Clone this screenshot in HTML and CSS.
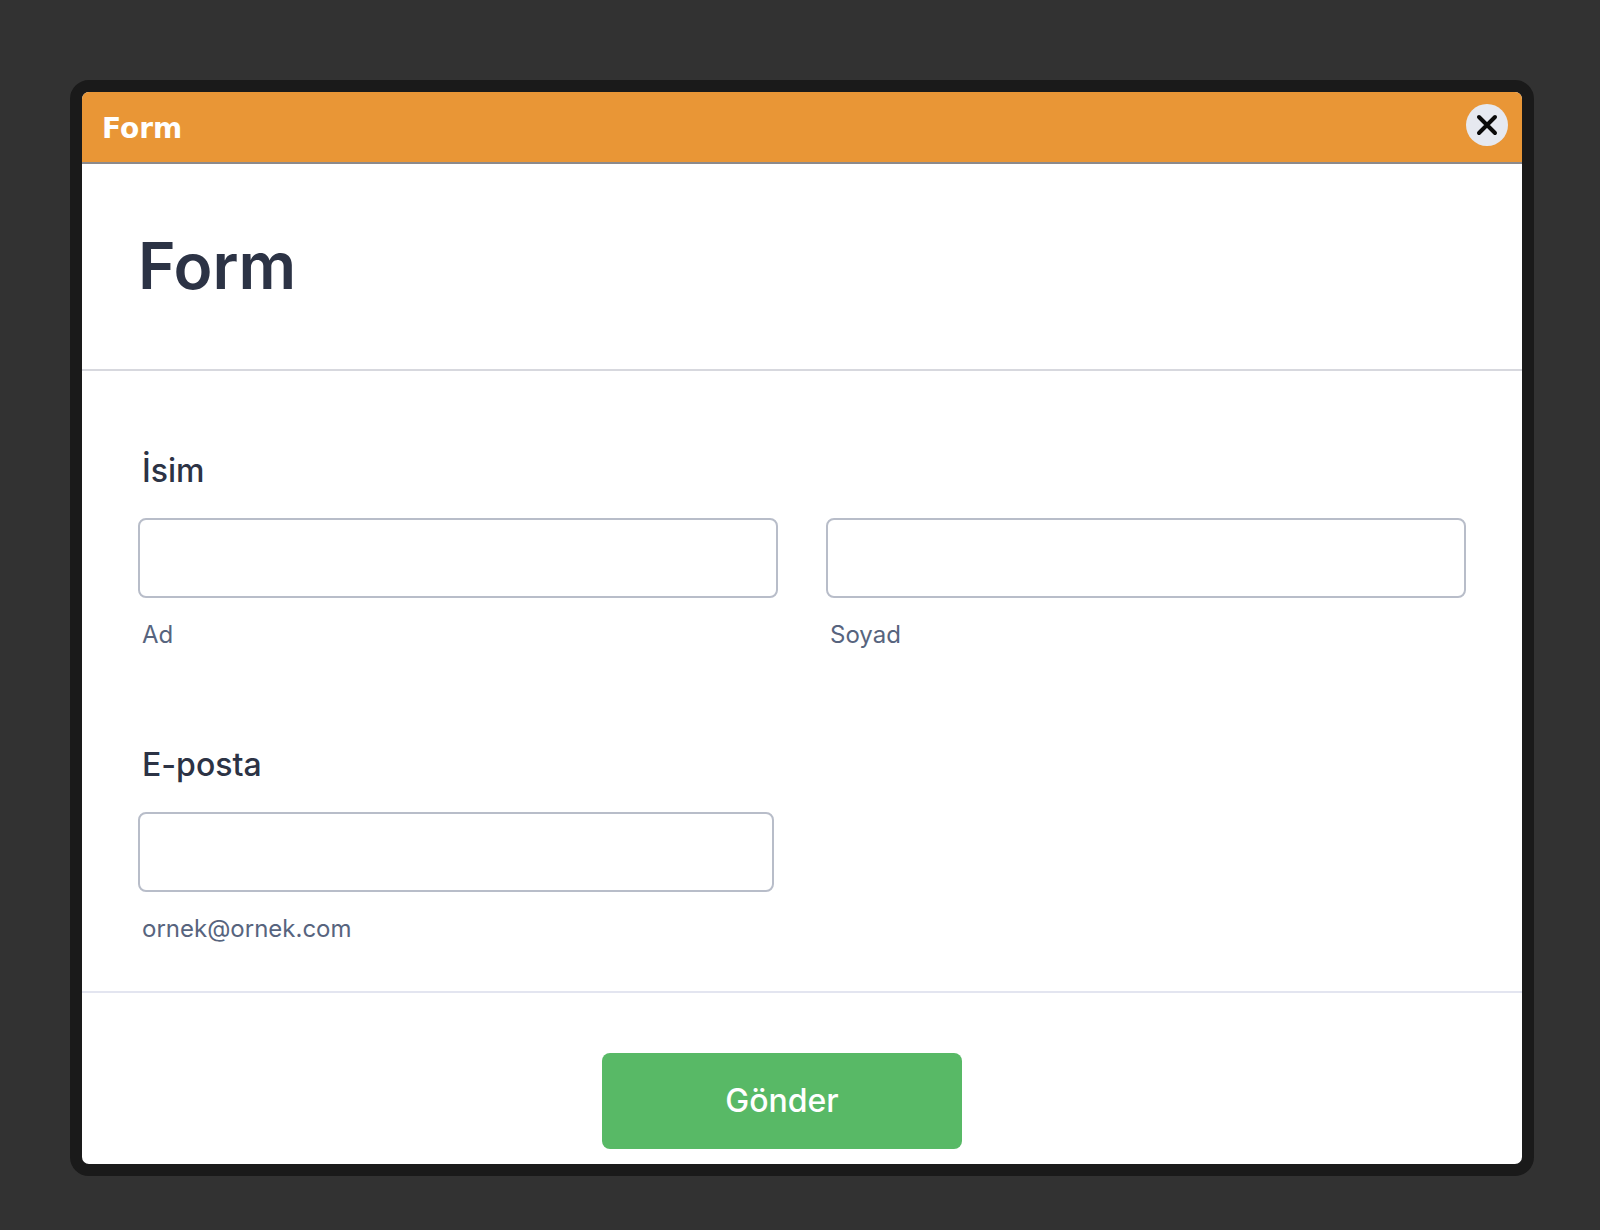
FILE: index.html
```html
<!DOCTYPE html>
<html lang="tr">
<head>
  <meta charset="UTF-8">
  <title>Form</title>
  <link rel="stylesheet" href="styles.css">
</head>
<body>
  <div class="modal">
    <div class="modal-header">
      <div class="modal-title">Form</div>
      <button class="close" type="button" aria-label="Kapat">
        <svg width="42" height="42" viewBox="0 0 42 42">
          <path d="M13 13L29 29M29 13L13 29" stroke="#0a0a0a" stroke-width="4" stroke-linecap="round"/>
        </svg>
      </button>
    </div>

    <form>
      <div class="form-header">
        <h1>Form</h1>
      </div>

      <div class="fields">
        <div class="field" role="group" aria-labelledby="name-label">
          <div class="label" id="name-label">İsim</div>
          <div class="row">
            <div class="col">
              <input type="text" id="first" name="first">
              <label class="sub-label" for="first">Ad</label>
            </div>
            <div class="col">
              <input type="text" id="last" name="last">
              <label class="sub-label" for="last">Soyad</label>
            </div>
          </div>
        </div>

        <div class="field">
          <label class="label" for="email">E-posta</label>
          <div class="col email">
            <input type="email" id="email" name="email">
            <label class="sub-label" for="email">ornek@ornek.com</label>
          </div>
        </div>
      </div>

      <div class="form-footer">
        <button class="submit" type="submit">Gönder</button>
      </div>
    </form>
  </div>
</body>
</html>
```
FILE: styles.css
```css
* {
  box-sizing: border-box;
}

body {
  margin: 0;
  padding: 80px 66px 54px 70px;
  background-color: #323232;
  font-family: Inter, sans-serif;
  color: #2c3345;
}

.modal {
  background-color: #ffffff;
  border: 12px solid #1a1a1a;
  border-radius: 19px;
  overflow: hidden;
}

.modal-header {
  display: flex;
  justify-content: space-between;
  align-items: flex-start;
  padding: 12px 14px 16px 20px;
  background-color: #e99636;
  border-bottom: 2px solid #8c8a8c;
}

.modal-title {
  font-family: "DejaVu Sans", sans-serif;
  font-size: 28px;
  font-weight: bold;
  line-height: 50px;
  height: 42px;
  color: #ffffff;
}

.close {
  width: 42px;
  height: 42px;
  padding: 0;
  border: none;
  border-radius: 50%;
  background-color: #e6e9f0;
  cursor: pointer;
}

.close svg {
  display: block;
}

.form-header {
  padding: 64px 56px 66px;
  border-bottom: 2px solid #d7d8de;
}

h1 {
  margin: 0;
  font-size: 64px;
  font-weight: 600;
  line-height: 75px;
}

.fields {
  display: flex;
  flex-direction: column;
  gap: 96px;
  padding: 80px 56px 48px;
}

.label {
  display: block;
  margin-bottom: 28px;
  padding-left: 4px;
  font-size: 32px;
  font-weight: 500;
  line-height: 39px;
}

.row {
  display: flex;
  gap: 48px;
}

.col {
  flex: 1;
}

.email {
  width: calc(50% - 28px);
}

input {
  display: block;
  width: 100%;
  height: 80px;
  padding: 0 20px;
  border: 2px solid #b8bdc9;
  border-radius: 8px;
  background-color: #ffffff;
  font-family: inherit;
  font-size: 32px;
  color: inherit;
}

.sub-label {
  display: block;
  margin-top: 22px;
  padding-left: 4px;
  font-size: 24px;
  line-height: 29px;
  color: #57647e;
}

.form-footer {
  display: flex;
  justify-content: center;
  padding: 60px 96px 15px 56px;
  border-top: 2px solid #e3e5f0;
}

.submit {
  min-width: 360px;
  height: 96px;
  padding: 0 24px 2px;
  border: none;
  border-radius: 8px;
  background-color: #58b966;
  color: #ffffff;
  font-family: inherit;
  font-size: 32px;
  font-weight: 500;
  cursor: pointer;
}
```
